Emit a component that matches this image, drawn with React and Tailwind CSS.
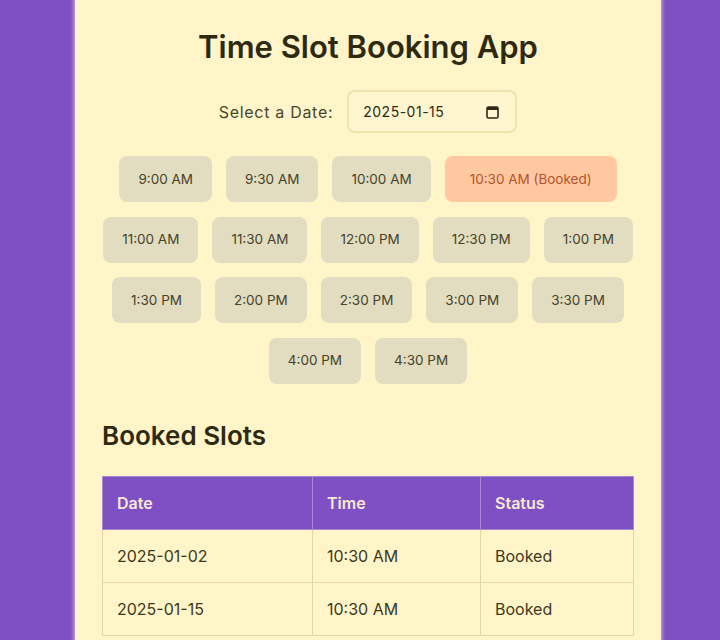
import React, { useState } from "react";

const SLOTS = [
  "9:00 AM", "9:30 AM", "10:00 AM", "10:30 AM",
  "11:00 AM", "11:30 AM", "12:00 PM", "12:30 PM", "1:00 PM",
  "1:30 PM", "2:00 PM", "2:30 PM", "3:00 PM", "3:30 PM",
  "4:00 PM", "4:30 PM",
];

const BOOKINGS = [
  { date: "2025-01-02", time: "10:30 AM", status: "Booked" },
  { date: "2025-01-15", time: "10:30 AM", status: "Booked" },
];

function CalendarIcon() {
  return (
    <svg width="13" height="14" viewBox="0 0 13 14" fill="none">
      <rect x="1" y="2" width="11" height="11" rx="1.5" stroke="#2e2a12" strokeWidth="1.6" />
      <rect x="1" y="2" width="11" height="3" fill="#2e2a12" />
    </svg>
  );
}

export default function App() {
  const [date] = useState("2025-01-15");
  const booked = BOOKINGS.filter((b) => b.date === date).map((b) => b.time);

  return (
    <div
      className="min-h-screen bg-[#7f4fc4] flex justify-center pl-4"
      style={{ fontFamily: "Inter, 'Noto Sans', sans-serif" }}
    >
      <div className="w-[586px] min-h-[700px] bg-[#fff5c8] px-[27px] pt-[24px] pb-10 shadow-[0_0_3px_2px_rgba(200,170,200,0.8)]">
        <h1 className="text-[31px] leading-[45px] font-semibold text-center text-[#2e2a12]">
          Time Slot Booking App
        </h1>

        <div className="mt-[21px] flex items-center justify-center gap-[14px]">
          <span className="text-[16px] tracking-[0.7px] text-[#4a4530]">Select a Date:</span>
          <div className="w-[170px] h-[43px] pl-[14px] pr-[16px] rounded-lg border-2 border-[#f1e3ad] bg-[#fff6cf] flex items-center justify-between">
            <span className="text-[14px] tracking-[0.5px] text-[#2e2a12]">{date}</span>
            <CalendarIcon />
          </div>
        </div>

        <div className="mt-[23px] -mx-[6px] flex flex-wrap justify-center gap-x-[14px] gap-y-[14.5px]">
          {SLOTS.map((s) => {
            const isBooked = booked.includes(s);
            return (
              <button
                key={s}
                className={
                  isBooked
                    ? "h-[46px] px-[25px] rounded-lg bg-[#ffc8a0] text-[#b5532d] text-[13.5px]"
                    : "h-[46px] px-[19px] rounded-lg bg-[#e2ddc0] text-[#47422a] text-[13.5px]"
                }
              >
                {isBooked ? `${s} (Booked)` : s}
              </button>
            );
          })}
        </div>

        <h2 className="mt-[34px] text-[26px] leading-[36px] font-semibold text-[#2e2a12]">
          Booked Slots
        </h2>

        <table className="mt-[22px] w-full border-collapse text-[16px] text-[#3d3822]">
          <thead>
            <tr className="bg-[#7f4fc4] text-[#f8ead2]">
              <th className="w-[210px] h-[53px] px-[14px] text-left font-semibold border border-[#a987d0]">Date</th>
              <th className="w-[168px] h-[53px] px-[14px] text-left font-semibold border border-[#a987d0]">Time</th>
              <th className="h-[53px] px-[14px] text-left font-semibold border border-[#a987d0]">Status</th>
            </tr>
          </thead>
          <tbody>
            {BOOKINGS.map((b) => (
              <tr key={b.date}>
                <td className="h-[53px] px-[14px] border border-[#e6d6a6]">{b.date}</td>
                <td className="h-[53px] px-[14px] border border-[#e6d6a6]">{b.time}</td>
                <td className="h-[53px] px-[14px] border border-[#e6d6a6]">{b.status}</td>
              </tr>
            ))}
          </tbody>
        </table>
      </div>
    </div>
  );
}
